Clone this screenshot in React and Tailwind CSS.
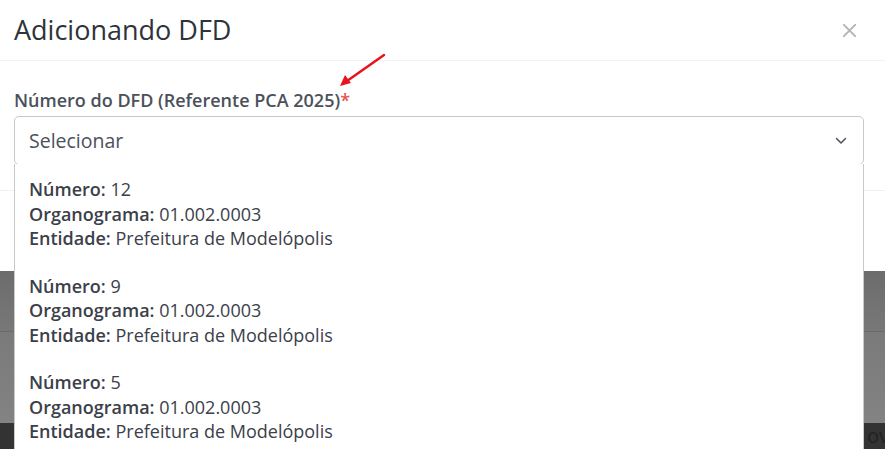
import React from 'react';

const items = [
  { numero: '12', organograma: '01.002.0003', entidade: 'Prefeitura de Modelópolis' },
  { numero: '9', organograma: '01.002.0003', entidade: 'Prefeitura de Modelópolis' },
  { numero: '5', organograma: '01.002.0003', entidade: 'Prefeitura de Modelópolis' },
];

const OptionItem = ({ item }) => (
  <div className="text-[18px] leading-[24.5px] text-[#3b4049]">
    <div><span className="font-semibold">Número:</span> {item.numero}</div>
    <div><span className="font-semibold">Organograma:</span> {item.organograma}</div>
    <div><span className="font-semibold">Entidade:</span> {item.entidade}</div>
  </div>
);

export default function App() {
  return (
    <div className="relative w-[885px] h-[449px] overflow-hidden bg-white" style={{ fontFamily: '"Open Sans", sans-serif' }}>
      {/* modal */}
      <div className="bg-white">
        <div className="flex items-center justify-between h-[61px] pl-[14px] pr-[28px] border-b border-[#f1f2f5]">
          <h1 className="text-[27px] text-[#2f333a] leading-none -mt-[2px]">Adicionando DFD</h1>
          <svg width="15" height="15" viewBox="0 0 16 16" className="text-[#b3b6bb]">
            <path d="M2 2 L14 14 M14 2 L2 14" stroke="currentColor" strokeWidth="2.2" strokeLinecap="round" />
          </svg>
        </div>
        <div className="px-[14px] pt-[27px] h-[130px] border-b border-[#eef0f3]">
          <label className="block text-[18px] font-semibold text-[#4b515a] leading-[24px]">
            Número do DFD (Referente PCA 2025)<span className="text-[#e55353]">*</span>
          </label>
          <div className="relative mt-[4px] mr-[7px]">
            <div className="flex items-center justify-between h-[49px] border border-[#c5c9d0] rounded-[5px] pl-[14px] pr-[16px]">
              <span className="text-[19.5px] text-[#4b515a]">Selecionar</span>
              <svg width="12" height="8" viewBox="0 0 12 8">
                <path d="M1.5 1.5 L6 6 L10.5 1.5" fill="none" stroke="#4b515a" strokeWidth="1.5" strokeLinecap="round" strokeLinejoin="round" />
              </svg>
            </div>
            {/* dropdown menu */}
            <div className="absolute left-0 right-0 top-[48px] h-[300px] z-10 bg-white border-x border-[#c5c9d0] px-[14px] pt-[13px] flex flex-col gap-[23px]">
              {items.map((item, i) => (
                <OptionItem key={i} item={item} />
              ))}
            </div>
          </div>
        </div>
        <div className="h-[80px]" />
      </div>
      {/* backdrop behind the modal */}
      <div className="h-[61px] bg-gradient-to-b from-[#6c6c6c] to-[#787878] border-b border-[#6a6a6a]" />
      <div className="h-[91px] bg-gradient-to-b from-[#7a7a7a] to-[#838383]" />
      <div className="h-[26px] bg-[#333333] flex justify-end items-center overflow-hidden">
        <span className="text-[20px] text-[#222] -mr-[4px]">ov</span>
      </div>
      {/* red annotation arrow */}
      <svg className="absolute left-[330px] top-[48px] z-20" width="64" height="48" viewBox="0 0 64 48">
        <path d="M54 7 L17 33" stroke="#e8141c" strokeWidth="2.5" strokeLinecap="round" />
        <path d="M10 38 L15 27 L21 35 Z" fill="#e8141c" />
      </svg>
    </div>
  );
}
